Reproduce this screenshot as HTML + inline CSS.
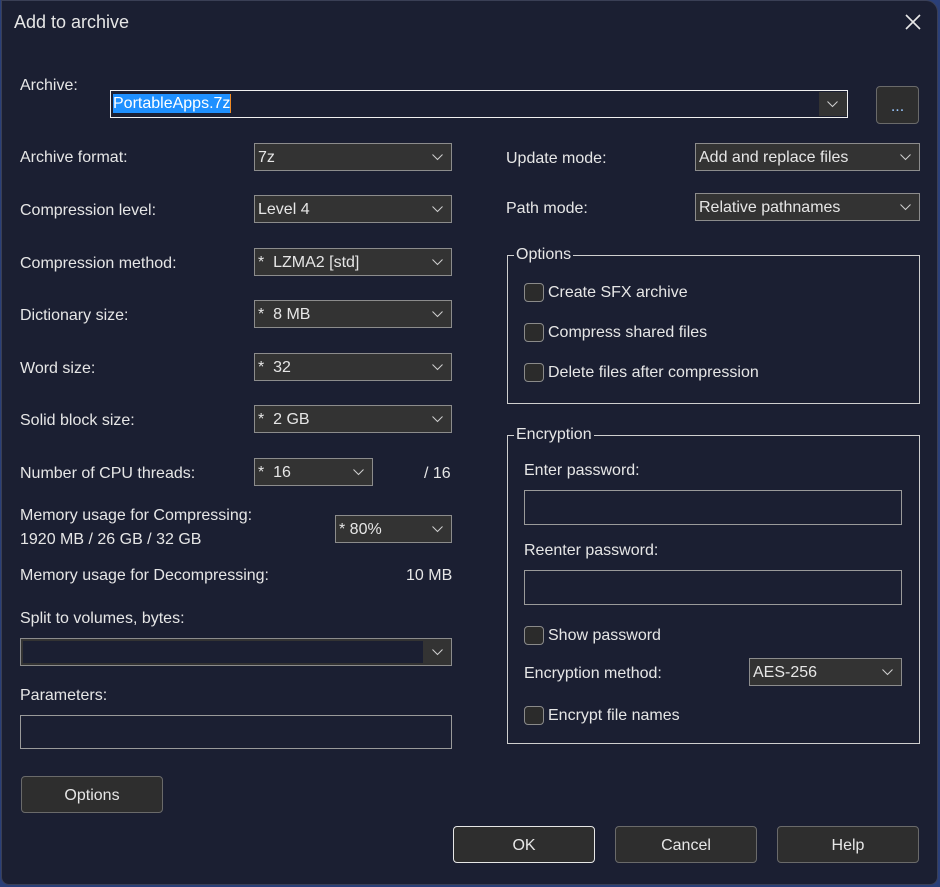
<!DOCTYPE html>
<html><head><meta charset="utf-8"><style>
*{box-sizing:border-box;margin:0;padding:0}
body{width:940px;height:887px;background:#2a3f78;overflow:hidden;font-family:"Liberation Sans",sans-serif;font-size:16px;color:#e6e6e6;position:relative}
.win{position:absolute;left:1px;top:0;width:937px;height:885px;background:#1b1f32;border-radius:0 12px 8px 8px;border:1px solid #3a3f55}
.a{position:absolute;white-space:nowrap}
.l{position:absolute;white-space:nowrap;line-height:18px}
.cb{position:absolute;height:28px;background:#333333;border:1px solid #8c8c8c;padding-left:3px;line-height:28px;white-space:nowrap}
.cb svg,.ar svg{position:absolute;right:8px;top:10px}
.btn{position:absolute;height:37px;background:#2e2e2e;border:1px solid #6a6a6a;border-radius:4px;text-align:center;line-height:37px;font-size:16px}
.grp{position:absolute;border:1px solid #cfcfcf}
.lg{position:absolute;top:-10px;left:6px;background:#1b1f32;padding:0 2px;line-height:18px;font-size:16px}
.chk{position:absolute;width:20px;height:19px;border:1px solid #8a8a8a;border-radius:4px;background:#2b2b2b}
.in{position:absolute;border:1px solid #9a9a9a;background:#1b1f32}
</style></head><body>
<div class="win"></div>
<div class="a" style="left:14px;top:12px;font-size:18px">Add to archive</div>
<svg class="a" style="left:905px;top:14px" width="16" height="16"><path d="M1 1L15 15M15 1L1 15" stroke="#e8e8e8" stroke-width="1.6"/></svg>

<div class="l" style="left:20px;top:77px">Archive:</div>
<div class="in" style="left:110px;top:90px;width:738px;height:28px;border:1px solid #f0f0f0;background:#1b1f32"></div>
<div class="a" style="left:113px;top:94px;width:118px;height:19px;background:#1e90ff;color:#fff;line-height:19px;font-size:16px">PortableApps.7z</div>
<div class="a" style="left:230px;top:94px;width:1px;height:19px;background:#f08a24"></div>
<div class="a" style="left:819px;top:92px;width:28px;height:24px;background:#333"><svg style="position:absolute;left:8px;top:9px" width="11" height="7"><path d="M0.5 0.5L5.5 5.5L10.5 0.5" stroke="#cfcfcf" fill="none"/></svg></div>
<div class="btn" style="left:876px;top:86px;width:43px;height:38px;color:#9ac8ff;line-height:40px">...</div>

<div class="l" style="left:20px;top:149px">Archive format:</div>
<div class="cb" style="left:254px;top:143px;width:198px">7z<svg width="11" height="7"><path d="M0.5 0.5L5.5 5.5L10.5 0.5" stroke="#cfcfcf" fill="none"/></svg></div>
<div class="l" style="left:20px;top:202px">Compression level:</div>
<div class="cb" style="left:254px;top:195px;width:198px">Level 4<svg width="11" height="7"><path d="M0.5 0.5L5.5 5.5L10.5 0.5" stroke="#cfcfcf" fill="none"/></svg></div>
<div class="l" style="left:20px;top:255px">Compression method:</div>
<div class="cb" style="left:254px;top:248px;width:198px">*&nbsp; LZMA2 [std]<svg width="11" height="7"><path d="M0.5 0.5L5.5 5.5L10.5 0.5" stroke="#cfcfcf" fill="none"/></svg></div>
<div class="l" style="left:20px;top:307px">Dictionary size:</div>
<div class="cb" style="left:254px;top:300px;width:198px">*&nbsp; 8 MB<svg width="11" height="7"><path d="M0.5 0.5L5.5 5.5L10.5 0.5" stroke="#cfcfcf" fill="none"/></svg></div>
<div class="l" style="left:20px;top:360px">Word size:</div>
<div class="cb" style="left:254px;top:353px;width:198px">*&nbsp; 32<svg width="11" height="7"><path d="M0.5 0.5L5.5 5.5L10.5 0.5" stroke="#cfcfcf" fill="none"/></svg></div>
<div class="l" style="left:20px;top:412px">Solid block size:</div>
<div class="cb" style="left:254px;top:405px;width:198px">*&nbsp; 2 GB<svg width="11" height="7"><path d="M0.5 0.5L5.5 5.5L10.5 0.5" stroke="#cfcfcf" fill="none"/></svg></div>
<div class="l" style="left:20px;top:465px">Number of CPU threads:</div>
<div class="cb" style="left:254px;top:458px;width:119px">*&nbsp; 16<svg width="11" height="7"><path d="M0.5 0.5L5.5 5.5L10.5 0.5" stroke="#cfcfcf" fill="none"/></svg></div>
<div class="l" style="left:424px;top:465px">/ 16</div>
<div class="l" style="left:20px;top:507px">Memory usage for Compressing:</div>
<div class="l" style="left:20px;top:531px">1920 MB / 26 GB / 32 GB</div>
<div class="cb" style="left:335px;top:515px;width:117px">* 80%<svg width="11" height="7"><path d="M0.5 0.5L5.5 5.5L10.5 0.5" stroke="#cfcfcf" fill="none"/></svg></div>
<div class="l" style="left:20px;top:567px">Memory usage for Decompressing:</div>
<div class="l" style="left:406px;top:567px">10 MB</div>
<div class="l" style="left:20px;top:610px">Split to volumes, bytes:</div>
<div class="cb" style="left:20px;top:638px;width:432px;background:#333"><div style="position:absolute;left:2px;top:2px;width:400px;height:22px;background:#1b1f32"></div><svg width="11" height="7"><path d="M0.5 0.5L5.5 5.5L10.5 0.5" stroke="#cfcfcf" fill="none"/></svg></div>
<div class="l" style="left:20px;top:687px">Parameters:</div>
<div class="in" style="left:20px;top:715px;width:432px;height:34px"></div>
<div class="btn" style="left:21px;top:776px;width:142px">Options</div>

<div class="l" style="left:506px;top:150px">Update mode:</div>
<div class="cb" style="left:695px;top:143px;width:225px">Add and replace files<svg width="11" height="7"><path d="M0.5 0.5L5.5 5.5L10.5 0.5" stroke="#cfcfcf" fill="none"/></svg></div>
<div class="l" style="left:506px;top:200px">Path mode:</div>
<div class="cb" style="left:695px;top:193px;width:225px">Relative pathnames<svg width="11" height="7"><path d="M0.5 0.5L5.5 5.5L10.5 0.5" stroke="#cfcfcf" fill="none"/></svg></div>

<div class="grp" style="left:507px;top:255px;width:413px;height:149px"><div class="lg">Options</div></div>
<div class="chk" style="left:524px;top:283px"></div><div class="l" style="left:548px;top:284px">Create SFX archive</div>
<div class="chk" style="left:524px;top:323px"></div><div class="l" style="left:548px;top:324px">Compress shared files</div>
<div class="chk" style="left:524px;top:363px"></div><div class="l" style="left:548px;top:364px">Delete files after compression</div>

<div class="grp" style="left:507px;top:435px;width:413px;height:309px"><div class="lg">Encryption</div></div>
<div class="l" style="left:524px;top:462px">Enter password:</div>
<div class="in" style="left:524px;top:490px;width:378px;height:35px"></div>
<div class="l" style="left:524px;top:542px">Reenter password:</div>
<div class="in" style="left:524px;top:570px;width:378px;height:35px"></div>
<div class="chk" style="left:524px;top:626px"></div><div class="l" style="left:548px;top:627px">Show password</div>
<div class="l" style="left:524px;top:665px">Encryption method:</div>
<div class="cb" style="left:749px;top:658px;width:153px">AES-256<svg width="11" height="7"><path d="M0.5 0.5L5.5 5.5L10.5 0.5" stroke="#cfcfcf" fill="none"/></svg></div>
<div class="chk" style="left:524px;top:706px"></div><div class="l" style="left:548px;top:707px">Encrypt file names</div>

<div class="btn" style="left:453px;top:826px;width:142px;border-color:#e6e6e6">OK</div>
<div class="btn" style="left:615px;top:826px;width:142px">Cancel</div>
<div class="btn" style="left:777px;top:826px;width:142px">Help</div>
</body></html>
